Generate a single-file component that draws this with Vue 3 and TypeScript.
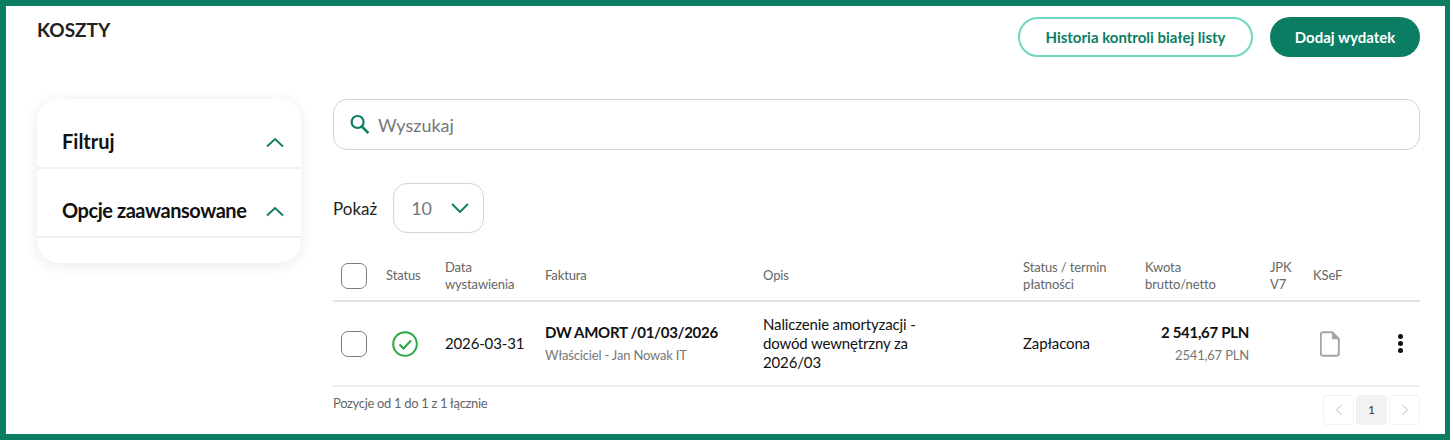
<script setup lang="ts">
</script>

<template>
  <div class="frame">
    <header class="top">
      <h1 class="title">KOSZTY</h1>
      <div class="actions">
        <button class="btn outline">Historia kontroli białej listy</button>
        <button class="btn solid">Dodaj wydatek</button>
      </div>
    </header>
    <div class="body">
      <aside class="side">
        <div class="acc"><span>Filtruj</span>
          <svg width="20" height="12" viewBox="0 0 20 12"><path d="M2 10.5 10 3l8 7.5" fill="none" stroke="#0a7d62" stroke-width="1.8"/></svg>
        </div>
        <div class="acc"><span class="tight">Opcje zaawansowane</span>
          <svg width="20" height="12" viewBox="0 0 20 12"><path d="M2 10.5 10 3l8 7.5" fill="none" stroke="#0a7d62" stroke-width="1.8"/></svg>
        </div>
      </aside>
      <main class="main">
        <div class="search">
          <svg width="20" height="21" viewBox="0 0 20 21"><circle cx="7.6" cy="8" r="6" fill="none" stroke="#0a7d62" stroke-width="2.2"/><path d="m12 12.6 6.4 6.6" stroke="#0a7d62" stroke-width="2.6"/></svg>
          <span>Wyszukaj</span>
        </div>
        <div class="show">
          <span>Pokaż</span>
          <div class="select"><span>10</span>
            <svg width="20" height="12" viewBox="0 0 20 12"><path d="M2 2l8 8 8-8" fill="none" stroke="#0a7d62" stroke-width="1.9"/></svg>
          </div>
        </div>
        <div class="row head">
          <div class="c-check"><i class="check"></i></div>
          <div class="c-status">Status</div>
          <div class="c-date">Data<br>wystawienia</div>
          <div class="c-inv">Faktura</div>
          <div class="c-desc">Opis</div>
          <div class="c-pay">Status / termin<br>płatności</div>
          <div class="c-amt">Kwota<br>brutto/netto</div>
          <div class="c-jpk">JPK<br>V7</div>
          <div class="c-ksef">KSeF</div>
        </div>
        <div class="row item">
          <div class="c-check"><i class="check"></i></div>
          <div class="c-status">
            <svg width="26" height="26" viewBox="0 0 26 26"><circle cx="13" cy="13" r="11.8" fill="none" stroke="#28a745" stroke-width="2"/><path d="m7.5 13.5 4 4 7.5-8" fill="none" stroke="#28a745" stroke-width="2"/></svg>
          </div>
          <div class="c-date dark">2026-03-31</div>
          <div class="c-inv"><b>DW AMORT /01/03/2026</b><small>Właściciel - Jan Nowak IT</small></div>
          <div class="c-desc dark">Naliczenie amortyzacji - dowód wewnętrzny za 2026/03</div>
          <div class="c-pay dark">Zapłacona</div>
          <div class="c-amt right"><b>2 541,67 PLN</b><small>2541,67 PLN</small></div>
          <div class="c-jpk"></div>
          <div class="c-ksef">
            <svg width="20" height="26" viewBox="0 0 20 26"><path d="M3 1.2h9.4l6.4 6.6v14.8a2.2 2.2 0 0 1-2.2 2.2H3a2.2 2.2 0 0 1-2.2-2.2V3.4A2.2 2.2 0 0 1 3 1.2Z" fill="none" stroke="#a5a5a5" stroke-width="2"/><path d="M12.4 1.2v6.6h6.4Z" fill="#a5a5a5" stroke="#a5a5a5" stroke-width="1"/></svg>
          </div>
          <div class="c-more"><i></i><i></i><i></i></div>
        </div>
        <div class="foot">
          <span>Pozycje od 1 do 1 z 1 łącznie</span>
          <div class="pager">
            <span class="pg"><svg width="8" height="12" viewBox="0 0 8 12"><path d="M6.5 1 1.5 6l5 5" fill="none" stroke="#dcdcdc" stroke-width="1.4"/></svg></span>
            <span class="pg on">1</span>
            <span class="pg"><svg width="8" height="12" viewBox="0 0 8 12"><path d="m1.5 1 5 5-5 5" fill="none" stroke="#dcdcdc" stroke-width="1.4"/></svg></span>
          </div>
        </div>
      </main>
    </div>
  </div>
</template>

<style>
html, body { margin: 0; background: #fff; }
</style>

<style scoped>
.frame {
  box-sizing: border-box;
  width: 1450px;
  height: 440px;
  border: solid #0a7d62;
  border-width: 6px 5px 6px 6px;
  padding: 11px 25px 0 31px;
  font-family: Lato, sans-serif;
  color: #111;
  overflow: hidden;
}
.top { display: flex; justify-content: space-between; align-items: flex-start; height: 82px; }
.title { margin: 0; padding-top: 1px; font-size: 19px; line-height: 24px; font-weight: 700; color: #222; }
.actions { display: flex; gap: 17px; }
.btn { box-sizing: border-box; height: 40px; border-radius: 20px; font: 700 15px Lato, sans-serif; }
.outline { width: 235px; background: #fff; border: 2px solid #6fd8c2; color: #0a7d62; }
.solid { width: 150px; background: #0a7d62; border: 0; color: #fff; }
.body { display: flex; align-items: flex-start; }
.side {
  box-sizing: border-box; width: 264px; height: 164px; margin-right: 32px; padding-top: 1px;
  border-radius: 22px; background: #fff; box-shadow: 0 2px 14px rgba(0,0,0,.09);
}
.acc {
  box-sizing: border-box; height: 69px; padding: 26px 16px 0 25px; border-bottom: 2px solid #f0f0f0;
  display: flex; justify-content: space-between; font-size: 20px; line-height: 30px; font-weight: 700;
}
.acc svg { margin-top: 10px; }
.tight { letter-spacing: -0.45px; }
.main { width: 1087px; }
.search {
  box-sizing: border-box; height: 51px; border: 1px solid #d4d4d4; border-radius: 14px;
  display: flex; align-items: center; gap: 8px; padding-left: 16px; font-size: 18px; color: #777;
}
.show { display: flex; align-items: center; gap: 16px; margin-top: 33px; font-size: 17px; color: #222; }
.select {
  box-sizing: border-box; width: 91px; height: 50px; border: 1px solid #d4d4d4; border-radius: 14px;
  display: flex; align-items: center; gap: 18px; padding-left: 17px; font-size: 18px; color: #777;
}
.row { display: flex; align-items: center; }
.head {
  box-sizing: border-box; height: 51px; margin-top: 18px; border-bottom: 2px solid #e2e2e2;
  font-size: 13px; line-height: 17px; color: #666; letter-spacing: -0.12px;
}
.item { box-sizing: border-box; height: 85px; border-bottom: 2px solid #efefef; font-size: 15px; line-height: 19px; letter-spacing: -0.15px; }
.check { display: block; box-sizing: border-box; width: 26px; height: 26px; border: 1.5px solid #7d7d7d; border-radius: 7px; margin-left: 8px; }
.c-check { width: 53px; flex: none; }
.c-status { width: 59px; flex: none; }
.item .c-status { padding-left: 6px; box-sizing: border-box; display: flex; }
.c-date { width: 100px; flex: none; }
.c-inv { width: 218px; flex: none; }
.c-desc { width: 260px; flex: none; }
.item .c-desc { padding-right: 88px; box-sizing: border-box; }
.c-pay { width: 122px; flex: none; }
.c-amt { width: 125px; flex: none; }
.right { text-align: right; box-sizing: border-box; padding-right: 21px; }
.c-jpk { width: 43px; flex: none; }
.c-ksef { width: 72px; flex: none; }
.item .c-ksef { padding-left: 7px; box-sizing: border-box; display: flex; }
.dark { color: #111; }
b { display: block; font-weight: 700; font-size: 15px; line-height: 19px; color: #111; letter-spacing: -0.3px; }
small { display: block; margin-top: 4px; font-size: 13px; line-height: 18px; color: #777; letter-spacing: -0.18px; }
.c-more { margin-left: 13px; display: flex; flex-direction: column; gap: 2px; }
.c-more i { display: block; width: 5px; height: 5px; background: #111; border-radius: 50%; }
.foot { display: flex; justify-content: space-between; align-items: flex-start; padding-top: 8px; font-size: 13px; line-height: 18px; color: #666; }
.foot > span { letter-spacing: -0.32px; margin-top: -1px; }
.pager { display: flex; gap: 2px; }
.pg { box-sizing: border-box; width: 31px; height: 30px; border: 1px solid #f2f2f2; border-radius: 3px; display: flex; align-items: center; justify-content: center; font-size: 12px; color: #333; }
.pg.on { background: #f2f2f2; }
</style>
